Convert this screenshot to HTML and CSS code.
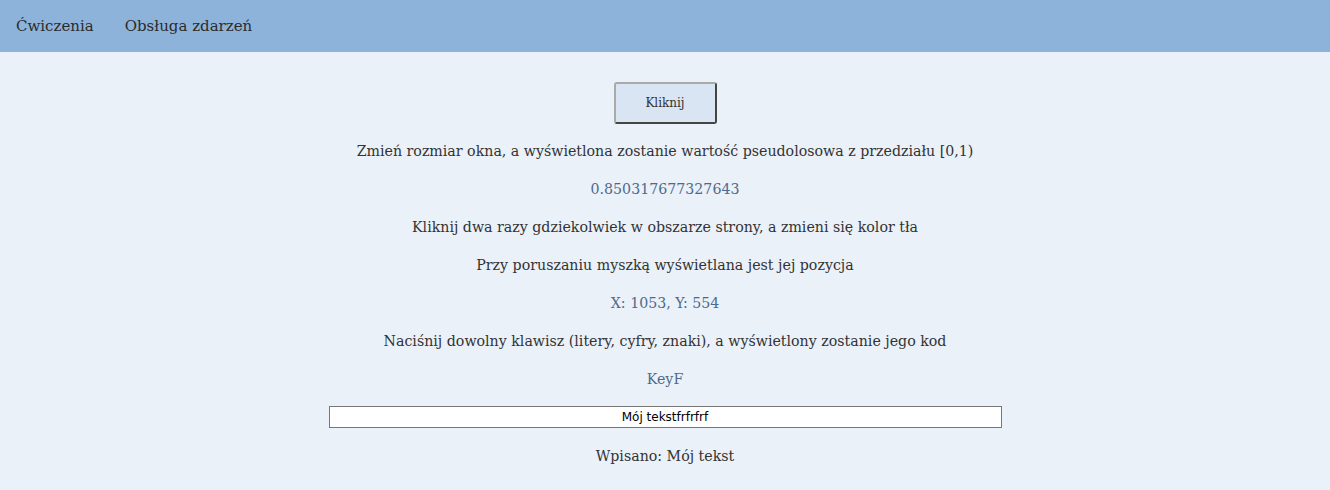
FILE: index.html
```
<!DOCTYPE html>
<html lang="pl">
<head>
<meta charset="utf-8">
<link rel="stylesheet" href="styles.css">
</head>
<body>
<nav class="nav">
  <a class="nav-link">Ćwiczenia</a>
  <a class="nav-link">Obsługa zdarzeń</a>
</nav>
<main class="content">
  <button class="btn">Kliknij</button>
  <p class="line">Zmień rozmiar okna, a wyświetlona zostanie wartość pseudolosowa z przedziału [0,1)</p>
  <p class="line value">0.850317677327643</p>
  <p class="line">Kliknij dwa razy gdziekolwiek w obszarze strony, a zmieni się kolor tła</p>
  <p class="line">Przy poruszaniu myszką wyświetlana jest jej pozycja</p>
  <p class="line value">X: 1053, Y: 554</p>
  <p class="line">Naciśnij dowolny klawisz (litery, cyfry, znaki), a wyświetlony zostanie jego kod</p>
  <p class="line value">KeyF</p>
  <input class="field" type="text" value="Mój tekstfrfrfrf">
  <p class="line">Wpisano: Mój tekst</p>
</main>
</body>
</html>
```
FILE: styles.css
```
html, body {
  margin: 0;
  padding: 0;
}
body {
  background: #eaf1f9;
  font-family: "DejaVu Serif", serif;
  color: #333;
  height: 490px;
  overflow: hidden;
}
.nav {
  background: #8db3db;
  height: 52px;
  display: flex;
  align-items: center;
  padding-left: 16px;
  gap: 31px;
}
.nav-link {
  font-size: 15px;
  color: #2b2b2b;
}
.content {
  display: flex;
  flex-direction: column;
  align-items: center;
  padding-top: 30px;
}
.btn {
  width: 103px;
  height: 42px;
  background: #d9e5f2;
  border: 2px solid;
  border-color: #aaa #444 #444 #aaa;
  border-radius: 3px;
  font-family: "DejaVu Serif", serif;
  font-size: 12px;
  color: #333;
  margin-bottom: 8px;
}
.line {
  margin: 0;
  height: 38px;
  line-height: 38px;
  font-size: 14.2px;
}
.value {
  color: #4d6a8c;
}
.field {
  width: 673px;
  height: 22px;
  box-sizing: border-box;
  border: 1px solid #777;
  background: #fff;
  text-align: center;
  font-family: "DejaVu Sans", sans-serif;
  font-size: 12px;
  color: #000;
  margin: 8px 0 9px;
  padding: 0;
}
```
